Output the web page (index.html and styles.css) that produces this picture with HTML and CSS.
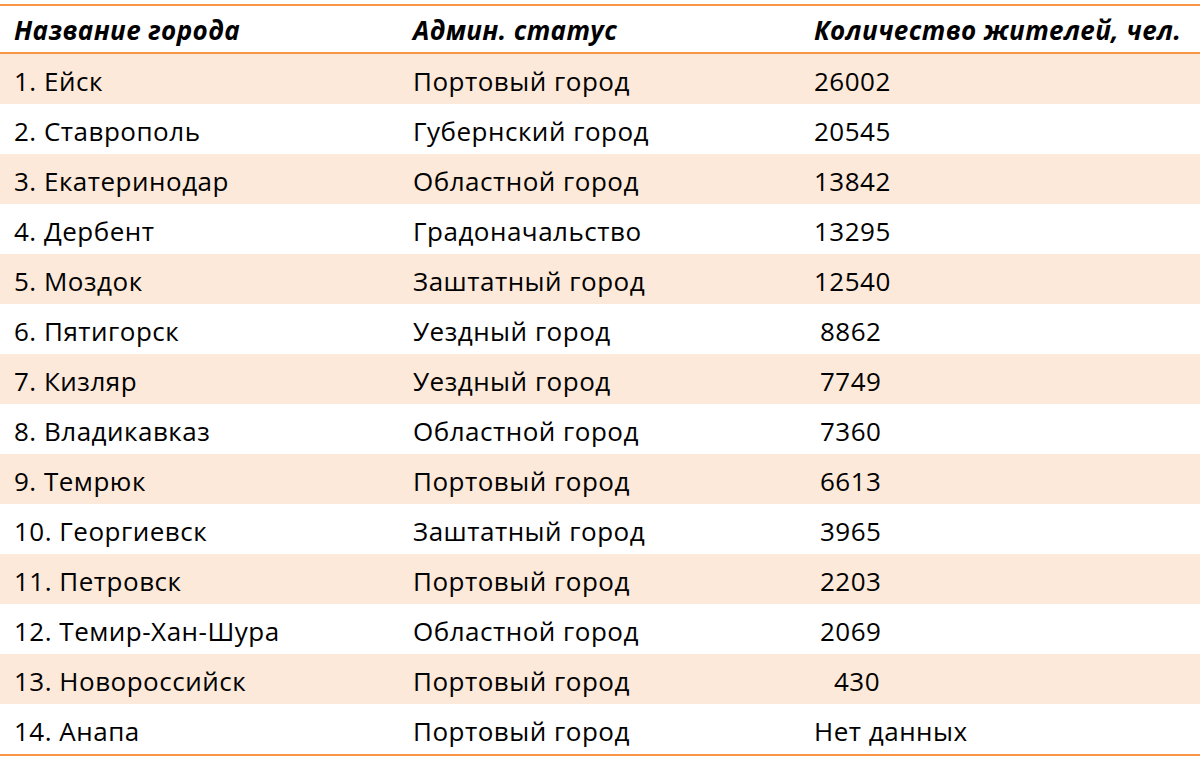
FILE: index.html
```html
<!DOCTYPE html>
<html lang="ru">
<head>
<meta charset="utf-8">
<link rel="stylesheet" href="styles.css">
</head>
<body>
<div class="table">
  <div class="row head">
    <div class="cell">Название города</div>
    <div class="cell">Админ. статус</div>
    <div class="cell">Количество жителей, чел.</div>
  </div>
  <div class="row alt"><div class="cell">1. Ейск</div><div class="cell">Портовый город</div><div class="cell">26002</div></div>
  <div class="row"><div class="cell">2. Ставрополь</div><div class="cell">Губернский город</div><div class="cell">20545</div></div>
  <div class="row alt"><div class="cell">3. Екатеринодар</div><div class="cell">Областной город</div><div class="cell">13842</div></div>
  <div class="row"><div class="cell">4. Дербент</div><div class="cell">Градоначальство</div><div class="cell">13295</div></div>
  <div class="row alt"><div class="cell">5. Моздок</div><div class="cell">Заштатный город</div><div class="cell">12540</div></div>
  <div class="row"><div class="cell">6. Пятигорск</div><div class="cell">Уездный город</div><div class="cell num4">8862</div></div>
  <div class="row alt"><div class="cell">7. Кизляр</div><div class="cell">Уездный город</div><div class="cell num4">7749</div></div>
  <div class="row"><div class="cell">8. Владикавказ</div><div class="cell">Областной город</div><div class="cell num4">7360</div></div>
  <div class="row alt"><div class="cell">9. Темрюк</div><div class="cell">Портовый город</div><div class="cell num4">6613</div></div>
  <div class="row"><div class="cell">10. Георгиевск</div><div class="cell">Заштатный город</div><div class="cell num4">3965</div></div>
  <div class="row alt"><div class="cell">11. Петровск</div><div class="cell">Портовый город</div><div class="cell num4">2203</div></div>
  <div class="row"><div class="cell">12. Темир-Хан-Шура</div><div class="cell">Областной город</div><div class="cell num4">2069</div></div>
  <div class="row alt"><div class="cell">13. Новороссийск</div><div class="cell">Портовый город</div><div class="cell num3">430</div></div>
  <div class="row"><div class="cell">14. Анапа</div><div class="cell">Портовый город</div><div class="cell">Нет данных</div></div>
</div>
</body>
</html>
```
FILE: styles.css
```css
html, body {
  margin: 0;
  padding: 0;
  background: #ffffff;
}

body {
  font-family: "Open Sans", "Liberation Sans", sans-serif;
  color: #000000;
}

.table {
  margin-top: 4px;
  width: 1200px;
  border-top: 2px solid #f79646;
  border-bottom: 2px solid #f79646;
}

.row {
  display: grid;
  grid-template-columns: 399px 401px 1fr;
  padding-left: 14px;
  height: 50px;
  align-items: center;
  font-size: 26px;
  letter-spacing: 0.5px;
}

.row .cell {
  padding-top: 4px;
  white-space: nowrap;
}

.head {
  height: 46px;
  border-bottom: 2px solid #f79646;
  font-weight: bold;
  font-style: italic;
  letter-spacing: 0.4px;
}

.head .cell {
  padding-top: 1px;
}

.alt {
  background: #fde9d9;
}

.num4 {
  padding-left: 6px;
}

.num3 {
  padding-left: 20px;
}
```
